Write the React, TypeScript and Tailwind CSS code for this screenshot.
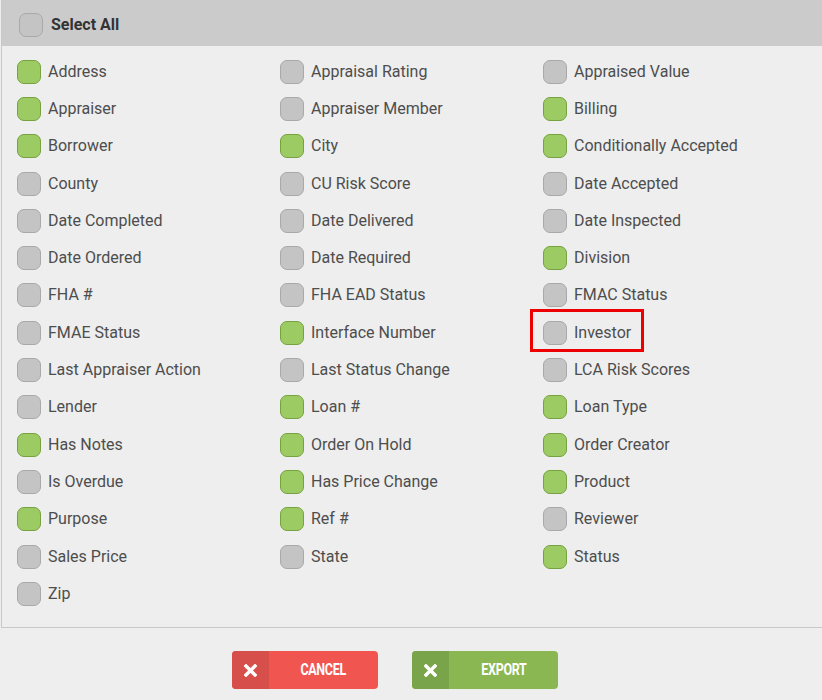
import { useState } from "react";

// campos del export, en orden de filas (3 columnas)
const campos: [string, boolean][] = [
  ["Address", true], ["Appraisal Rating", false], ["Appraised Value", false],
  ["Appraiser", true], ["Appraiser Member", false], ["Billing", true],
  ["Borrower", true], ["City", true], ["Conditionally Accepted", true],
  ["County", false], ["CU Risk Score", false], ["Date Accepted", false],
  ["Date Completed", false], ["Date Delivered", false], ["Date Inspected", false],
  ["Date Ordered", false], ["Date Required", false], ["Division", true],
  ["FHA #", false], ["FHA EAD Status", false], ["FMAC Status", false],
  ["FMAE Status", false], ["Interface Number", true], ["Investor", false],
  ["Last Appraiser Action", false], ["Last Status Change", false], ["LCA Risk Scores", false],
  ["Lender", false], ["Loan #", true], ["Loan Type", true],
  ["Has Notes", true], ["Order On Hold", true], ["Order Creator", true],
  ["Is Overdue", false], ["Has Price Change", true], ["Product", true],
  ["Purpose", true], ["Ref #", true], ["Reviewer", false],
  ["Sales Price", false], ["State", false], ["Status", true],
  ["Zip", false],
];

function Casilla({ marcado, onClick }: { marcado: boolean; onClick?: () => void }) {
  return (
    <span
      onClick={onClick}
      className={`block w-6 h-6 shrink-0 rounded-[7px] border cursor-pointer ${
        marcado ? "bg-[#9bcb62] border-[#76a23f]" : "bg-[#c4c4c4] border-[#a9a9a9]"
      }`}
    />
  );
}

function IconoX() {
  return (
    <svg width="13" height="13" viewBox="0 0 13 13">
      <path d="M2 2 L11 11 M11 2 L2 11" stroke="white" strokeWidth="3.4" strokeLinecap="square" />
    </svg>
  );
}

function Boton({ texto, claro, oscuro }: { texto: string; claro: string; oscuro: string }) {
  return (
    <button className={`flex w-[146px] h-[38px] rounded-[4px] overflow-hidden text-white ${claro}`}>
      <span className={`w-[37px] h-full flex items-center justify-center ${oscuro}`}>
        <IconoX />
      </span>
      <span className="flex-1 h-full flex items-center justify-center">
        <span className="text-[16px] font-bold scale-x-[0.78] tracking-tight">{texto}</span>
      </span>
    </button>
  );
}

export default function App() {
  const [estado, setEstado] = useState(campos.map((c) => c[1]));
  const todos = estado.every(Boolean);

  return (
    <div className="w-[822px] h-[700px] bg-[#eeeeee] font-['Roboto',sans-serif] overflow-hidden">
      <div className="ml-px border-l border-b border-[#c8c8c8]">
        {/* Cabecera: seleccionar todo */}
        <div className="h-[46px] bg-[#cbcbcb] flex items-center pl-[17px] pt-[4px] gap-2">
          <Casilla marcado={todos} onClick={() => setEstado(estado.map(() => !todos))} />
          <span className="text-[16px] font-bold text-[#333333]">Select All</span>
        </div>

        {/* Rejilla de campos */}
        <div className="grid grid-cols-[263px_263px_263px] auto-rows-[37.3px] pl-[15px] pt-[7px] pb-[15px]">
          {campos.map(([nombre], i) => (
            <div key={nombre} className="flex items-center gap-[7px]">
              <div className="relative flex items-center gap-[7px]">
                <Casilla
                  marcado={estado[i]}
                  onClick={() => setEstado(estado.map((v, j) => (j === i ? !v : v)))}
                />
                <span className="text-[16px] text-[#4d4d4d]">{nombre}</span>
                {nombre === "Investor" && (
                  <span className="absolute -left-[13px] -top-[12px] w-[114px] h-[43px] border-[3px] border-[#ee0000] pointer-events-none" />
                )}
              </div>
            </div>
          ))}
        </div>
      </div>

      {/* Botones */}
      <div className="flex justify-center gap-[34px] pr-[32px] pt-[23px]">
        <Boton texto="CANCEL" claro="bg-[#f0554f]" oscuro="bg-[#d64f4a]" />
        <Boton texto="EXPORT" claro="bg-[#8bb753]" oscuro="bg-[#7aa449]" />
      </div>
    </div>
  );
}
